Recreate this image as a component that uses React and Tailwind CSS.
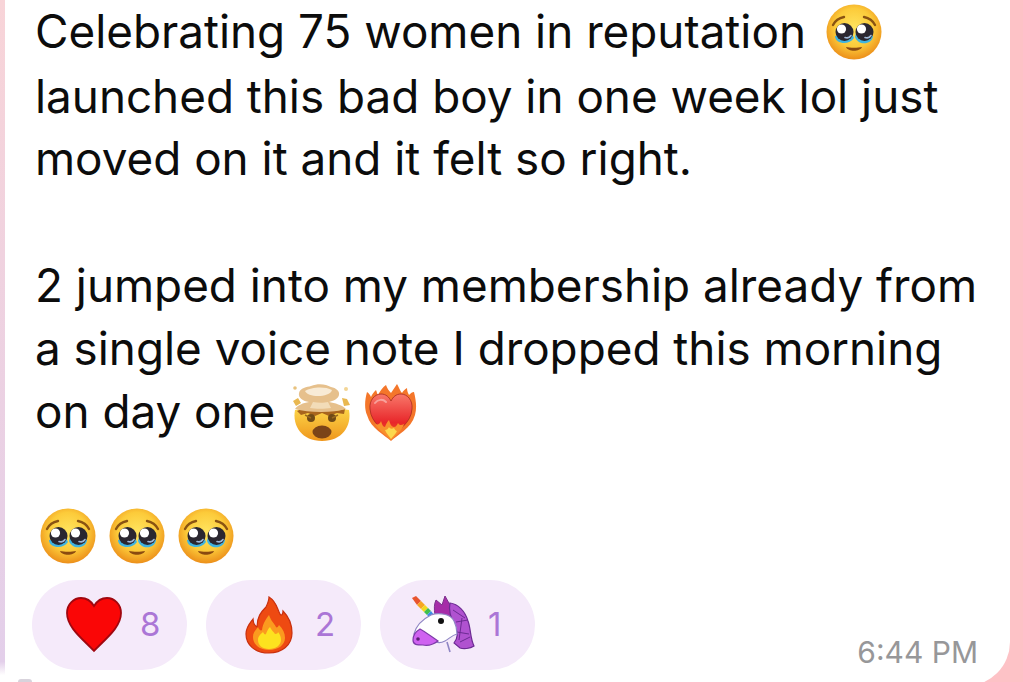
import React from 'react';

const Pleading = ({ size = 56 }) => (
    <svg width={size} height={size} viewBox="0 0 56 56" className="inline-block shrink-0">
        <defs>
            <radialGradient id="faceFill" cx="50%" cy="42%" r="58%">
                <stop offset="0%" stopColor="#ffe45f" />
                <stop offset="60%" stopColor="#fccb3a" />
                <stop offset="100%" stopColor="#ec8f1a" />
            </radialGradient>
        </defs>
        <circle cx="28" cy="28" r="27.5" fill="url(#faceFill)" />
        <path d="M7 21c2-4 6-7 11-8" fill="none" stroke="#8a5312" strokeWidth="2.4" strokeLinecap="round" />
        <path d="M38 13c5 1 9 4 11 8" fill="none" stroke="#8a5312" strokeWidth="2.4" strokeLinecap="round" />
        <path d="M9 32c0 8 14 10 19 2l-2-4z" fill="#3fb4e0" />
        <path d="M29 33c3 9 17 8 18-1l-17-3z" fill="#3fb4e0" />
        <circle cx="18.5" cy="28" r="9" fill="#2b2730" />
        <circle cx="38.5" cy="28" r="9" fill="#2b2730" />
        <circle cx="15.5" cy="25" r="4.6" fill="#fff" />
        <circle cx="35.5" cy="25" r="4.6" fill="#fff" />
        <path d="M19 33.5a5 5 0 0 0 6-2" fill="none" stroke="#9fb8d8" strokeWidth="1.6" strokeLinecap="round" />
        <path d="M39 33.5a5 5 0 0 0 6-2" fill="none" stroke="#9fb8d8" strokeWidth="1.6" strokeLinecap="round" />
        <path d="M20 43c4 1 12 1 16 0-2 5-14 5-16 0z" fill="#8a4a10" />
    </svg>
);

const MindBlown = () => (
    <svg width="60" height="60" viewBox="0 0 60 60" className="inline-block">
        <defs>
            <linearGradient id="blownFace" x1="0" y1="0" x2="0" y2="1">
                <stop offset="0%" stopColor="#fcd548" />
                <stop offset="100%" stopColor="#ef961c" />
            </linearGradient>
        </defs>
        <path d="M3 28c8-2 46-2 54 0 3 16-7 31-27 31S0 44 3 28z" fill="url(#blownFace)" />
        <path d="M5 29l7-3 7 3 6-3 6 3 7-3 6 3 9-2-1 5-7-1-8 3-7-3-7 3-7-3-7 2z" fill="#a8651e" />
        <circle cx="19" cy="36" r="4" fill="#6f4a17" />
        <circle cx="40" cy="36" r="4" fill="#6f4a17" />
        <path d="M19 36l-6-3M40 36l6-3" stroke="#9a6a1e" strokeWidth="1.4" />
        <ellipse cx="30" cy="50" rx="9.5" ry="6.5" fill="#7b4418" />
        <path d="M3 27c3-4 8-6 14-7-6-1-11-4-10-9 1-5 8-6 12-7 7-3 15-2 20 1 5 1 9 4 8 8-1 4-6 6-10 7 6 1 13 3 17 7-7 2-15 3-25 3s-19-1-26-3z" fill="#e6c08c" />
        <path d="M13 9c6-4 20-5 27-1-1 4-8 6-14 6s-12-2-13-5z" fill="#f8ebd6" />
        <path d="M21 20c5 1 11 1 15 0l3 6c-6 1-16 1-21 0z" fill="#f2dcb8" />
        <circle cx="3" cy="6" r="1.8" fill="#e8c27e" />
        <circle cx="54" cy="7" r="2" fill="#f3d595" />
        <path d="M1 19l5-3 3 5-5 3z" fill="#e9b850" />
        <path d="M50 16l5 1 3 6-6 1z" fill="#e9b850" />
    </svg>
);

const HeartOnFire = () => (
    <svg width="52" height="58" viewBox="0 0 52 58" className="inline-block">
        <defs>
            <linearGradient id="heartFire" x1="0" y1="0" x2="0" y2="1">
                <stop offset="0%" stopColor="#f8786a" />
                <stop offset="65%" stopColor="#e8262a" />
                <stop offset="100%" stopColor="#ef5a22" />
            </linearGradient>
        </defs>
        <path d="M26 58C20 52 6 46 2 32-1 25 0 16 2 9c2 1 3 3 4 5 1-3 3-5 5-7 1 2 1 4 2 5 2-4 5-8 8-10 1 3 3 6 5 8 2-3 4-6 6-9 2 3 3 7 5 9 1-2 3-4 5-5 0 3 1 5 2 7 2-2 3-3 5-3 2 8 3 16 1 23-4 14-18 20-24 26z" fill="#f4762a" />
        <path d="M26 55C20 47 6 41 5 26 4 17 10 11 16 11c5 0 8 3 10 7 2-4 5-7 10-7 6 0 12 6 11 15-1 15-15 21-21 29z" fill="url(#heartFire)" stroke="#a82a20" strokeWidth=".8" />
        <path d="M10 20c3-4 8-4 11-1" fill="none" stroke="#fff" strokeOpacity=".4" strokeWidth="2" strokeLinecap="round" />
        <path d="M26 57c-5-5-12-9-16-16 3 1 5 0 6-3 1 3 2 6 4 6 1-3 2-5 4-7 1 3 2 7 5 7 2 0 3-2 4-4 1 2 3 3 6 1-2 7-8 11-13 16z" fill="#f8902c" />
        <path d="M26 56c-2-3-5-6-6-9 2 0 3-1 4-3 1 2 3 2 5 1 1 2 2 3 3 3-1 3-4 5-6 8z" fill="#fcd84e" />
    </svg>
);

const Heart = () => (
    <svg width="56" height="56" viewBox="0 0 56 56" className="shrink-0">
        <path d="M28 54C18 43 1 31 1 16 1 7 8 1 15 1c6 0 10 3 13 8 3-5 7-8 13-8 7 0 14 6 14 15 0 15-17 27-27 38z" fill="#fa0606" stroke="#a0070f" strokeWidth="1.8" />
    </svg>
);

const Fire = () => (
    <svg width="48" height="58" viewBox="0 0 48 58" className="shrink-0">
        <path d="M24 57C10 57 1 49 1 38c0-7 4-11 7-15 0 4 1 6 4 8 0-10 4-15 9-20 2-4 3-7 3-10 8 5 8 12 11 17 1 2 3 1 3-3 6 6 9 14 9 22 0 12-10 20-23 20z" fill="#ee4a12" stroke="#c9300f" strokeWidth="1.2" />
        <path d="M24 54c-10 0-16-6-16-13 0-5 3-7 5-10 1 3 3 4 4 3 1-7 4-11 7-15 2 6 5 8 7 12 1 1 2 0 3-2 4 4 6 8 6 13 0 7-7 12-16 12z" fill="#fb9a1f" />
        <path d="M24 53c-7 0-11-4-11-9 0-4 3-6 5-8 1 2 2 3 3 2 1-3 2-5 4-7 1 3 4 5 5 7 2 0 3-1 3-2 2 2 3 5 3 8 0 5-5 9-12 9z" fill="#fde21f" />
    </svg>
);

const Unicorn = () => (
    <svg width="64" height="58" viewBox="0 0 64 58" className="shrink-0">
        <path d="M1 2l4-2 5 5-4 4z" fill="#e8552f" />
        <path d="M6 9l4-4 4 4-4 4z" fill="#f6a623" />
        <path d="M10 13l4-4 3 3-4 4z" fill="#f2d91f" />
        <path d="M13 16l4-4 3 3-4 4z" fill="#3fbf4e" />
        <path d="M16 19l4-4 3 4-4 3z" fill="#3d8fe6" />
        <path d="M24 19c-1-6-1-11 1-15l6 5 3-9 5 9 1 12z" fill="#a62ca8" stroke="#7b2f8c" strokeWidth="1" />
        <path d="M39 7c8 1 15 8 18 18 3 8 2 17 6 25-4 3-11 3-14 2l-6-5c4-5 4-11 1-16-3-8-7-15-5-24z" fill="#b052d0" stroke="#6c2b93" strokeWidth="1.2" />
        <path d="M42 14l12 8M45 26l12-2M46 36l12 2M49 46l10-5M51 22l-3 22" stroke="#6c2b93" strokeWidth="1" fill="none" />
        <path d="M20 19c8-3 20-1 23 6 2 4 3 9 3 13-5 1-8 5-12 7-4 2-8 2-11 0L3 38c2-8 9-15 17-19z" fill="#fff" stroke="#8f86c4" strokeWidth="1.2" />
        <path d="M2 44c0-4 2-8 7-11 4 2 12 8 18 12-4 3-10 5-15 4-6 0-10 0-10-5z" fill="#cf62f0" stroke="#7d3aa8" strokeWidth="1.2" />
        <circle cx="7" cy="43" r="1.8" fill="#5a1f74" />
        <circle cx="30" cy="25" r="3" fill="#111" />
        <path d="M36 46l3 10" stroke="#8f86c4" strokeWidth="1.6" fill="none" />
    </svg>
);

const Reaction = ({ icon, count, className }) => (
    <div className={`flex h-[90px] w-[155px] items-center rounded-full bg-[#f5eafa] text-[33px] text-[#ab76d6] ${className}`}>
        {icon}
        <span>{count}</span>
    </div>
);

export default function App() {
    return (
        <div className="relative flex h-[682px] overflow-hidden bg-[#fdc2c6] font-['Inter','Liberation_Sans',sans-serif]">
            <div className="w-[5px] bg-[linear-gradient(to_bottom,#f8d4d8,#e3cfea_97%,#fff_99%)]" />
            <div className="relative h-[686px] w-[1005px] rounded-br-[44px] bg-white pl-[31px] text-[45.8px] leading-[63.4px] text-[#0c0c0c]">
                <div className="-ml-[1px] whitespace-nowrap">
                    <div className="flex h-[63.4px] items-center gap-[20px]">Celebrating 75 women in reputation <Pleading /></div>
                    <div className="h-[63.4px] pt-[2px]">launched this bad boy in one week lol just</div>
                    <div className="h-[63.4px]">moved on it and it felt so right.</div>
                    <div className="h-[63.4px]" />
                    <div className="h-[63.4px]">2 jumped into my membership already from</div>
                    <div className="h-[63.4px]">a single voice note I dropped this morning</div>
                    <div className="flex h-[63.4px] items-center">
                        <span>on day one</span>
                        <span className="ml-[17px] flex"><MindBlown /></span>
                        <span className="ml-[13px] flex"><HeartOnFire /></span>
                    </div>
                </div>
                <div className="mt-[64px] flex gap-[13px] pl-[4px]">
                    <Pleading /><Pleading /><Pleading />
                </div>
                <div className="mt-[16px] -ml-[4px] flex gap-[19px]">
                    <Reaction icon={<Heart />} count="8" className="gap-[18px] pl-[34px]" />
                    <Reaction icon={<Fire />} count="2" className="gap-[22px] pl-[39px]" />
                    <Reaction icon={<Unicorn />} count="1" className="gap-[13px] pl-[31px]" />
                </div>
                <span className="absolute bottom-[19px] right-[32px] text-[30px] leading-none text-[#979799]">6:44 PM</span>
            </div>
            <div className="absolute bottom-0 left-[18px] h-[3px] w-[14px] rounded-t-full bg-[#d8d3dc]" />
        </div>
    );
}
